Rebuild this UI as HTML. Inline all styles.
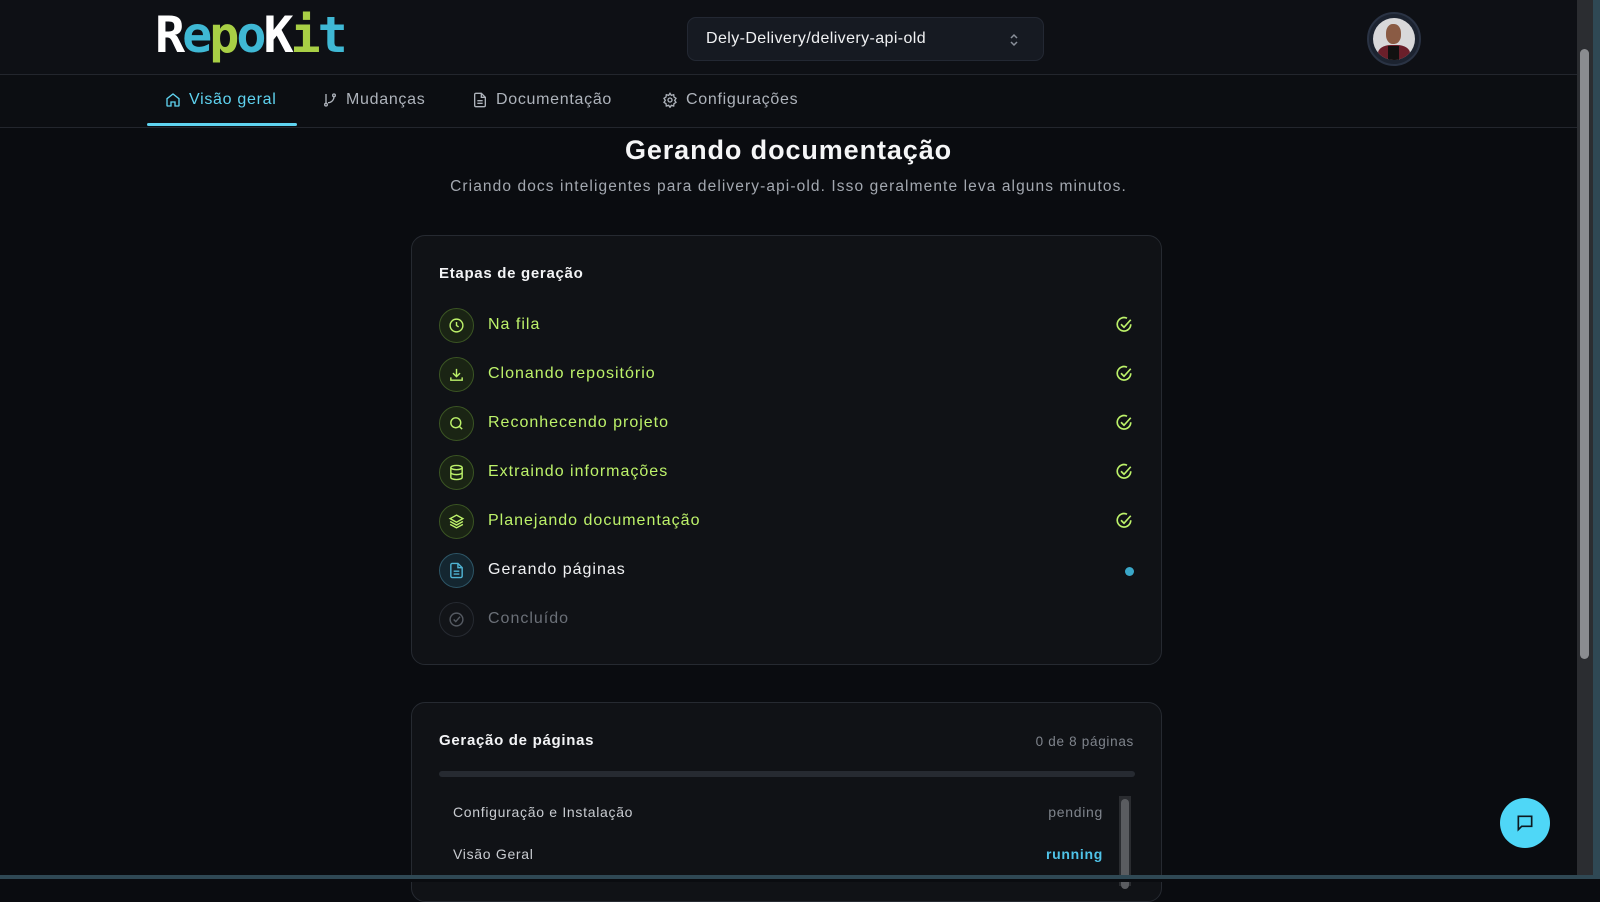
<!DOCTYPE html>
<html><head><meta charset="utf-8"><style>
*{box-sizing:border-box;margin:0;padding:0}
body{width:1600px;height:882px;overflow:hidden;background:#0a0c10;font-family:"Liberation Sans",sans-serif;color:#e5e7eb;position:relative;letter-spacing:.7px}
.hdr{position:absolute;left:0;top:0;width:1577px;height:75px;background:#0e1015;border-bottom:1px solid #23262d}
.tabs{position:absolute;left:0;top:75px;width:1577px;height:53px;background:#0c0e12;border-bottom:1px solid #23262d}
.tab{position:absolute;top:16px;font-size:16px;color:#aeb3bb;display:flex;align-items:center;gap:8px}
.tab svg{width:16px;height:16px}
.card{position:absolute;left:411px;width:751px;background:#101216;border:1px solid #262a31;border-radius:14px}
.row{position:absolute;left:27px;display:flex;align-items:center;height:36px}
.ic{width:35px;height:35px;border-radius:50%;background:#1a2414;border:1px solid #3b5523;display:flex;align-items:center;justify-content:center;margin-right:14px}
.ic svg{width:17px;height:17px}
.lbl{font-size:16px;color:#bdf26a;letter-spacing:1px}
.chk{position:absolute;left:703px;width:18px;height:18px}
</style></head><body>
<div class="hdr">
  <div style="position:absolute;left:155px;top:8px;font:bold 50px 'DejaVu Sans Mono',monospace;letter-spacing:-3px;line-height:55px">
    <span style="color:#fff">R</span><span style="color:#3fb8d4">e</span><span style="color:#a8cf45">p</span><span style="color:#3fb8d4">o</span><span style="color:#fff">K</span><span style="color:#a8cf45">i</span><span style="color:#3fb8d4">t</span>
  </div>
  <div style="position:absolute;left:687px;top:17px;width:357px;height:44px;background:#161a22;border:1px solid #232833;border-radius:9px">
    <div style="position:absolute;left:18px;top:12px;font-size:16px;color:#f0f1f3;letter-spacing:.4px">Dely-Delivery/delivery-api-old</div>
    <svg style="position:absolute;left:320px;top:13px" width="12" height="18" viewBox="0 0 12 18" fill="none" stroke="#8a909a" stroke-width="1.5"><path d="M3 7l3-3 3 3M3 11l3 3 3-3"/></svg>
  </div>
  <div style="position:absolute;left:1367px;top:12px;width:54px;height:54px;border-radius:50%;background:#1c2330;border:2px solid #2a3344">
    <div style="position:absolute;left:4px;top:4px;width:42px;height:42px;border-radius:50%;background:#d8d8da;overflow:hidden">
      <div style="position:absolute;left:13px;top:6px;width:15px;height:20px;border-radius:45%;background:#8a5b44"></div>
      <div style="position:absolute;left:5px;top:27px;width:32px;height:20px;border-radius:40% 40% 0 0;background:#6b1f2a"></div>
      <div style="position:absolute;left:15px;top:28px;width:11px;height:16px;background:#111"></div>
    </div>
  </div>
</div>
<div class="tabs">
  <div class="tab" style="left:165px;color:#5fd3f0"><svg viewBox="0 0 24 24" fill="none" stroke="#5fd3f0" stroke-width="2"><path d="M3 10l9-7 9 7v10a1 1 0 0 1-1 1h-5v-6h-6v6H4a1 1 0 0 1-1-1z"/></svg>Visão geral</div>
  <div style="position:absolute;left:147px;top:48px;width:150px;height:3px;background:#5fd3f0;border-radius:2px"></div>
  <div class="tab" style="left:322px"><svg viewBox="0 0 24 24" fill="none" stroke="#aeb3bb" stroke-width="2"><circle cx="6" cy="19" r="2"/><circle cx="18" cy="5" r="2"/><path d="M6 3v14M18 7a9 9 0 0 1-9 9"/></svg>Mudanças</div>
  <div class="tab" style="left:472px"><svg viewBox="0 0 24 24" fill="none" stroke="#aeb3bb" stroke-width="2"><path d="M14 2H6a2 2 0 0 0-2 2v16a2 2 0 0 0 2 2h12a2 2 0 0 0 2-2V8z"/><path d="M14 2v6h6M8 13h8M8 17h8"/></svg>Documentação</div>
  <div class="tab" style="left:662px"><svg viewBox="0 0 24 24" fill="none" stroke="#aeb3bb" stroke-width="2"><circle cx="12" cy="12" r="3"/><path d="M12 2l2 3 3.5-1 .5 3.5 3 2-2 3 2 3-3 2-.5 3.5-3.5-1-2 3-2-3-3.5 1-.5-3.5-3-2 2-3-2-3 3-2 .5-3.5 3.5 1z"/></svg>Configurações</div>
</div>
<div style="position:absolute;left:0;width:1577px;top:135px;text-align:center;font-size:27px;font-weight:bold;color:#f5f6f7;letter-spacing:.9px">Gerando documentação</div>
<div style="position:absolute;left:0;width:1577px;top:178px;text-align:center;font-size:15.5px;color:#a3a8b0;letter-spacing:1.1px">Criando docs inteligentes para delivery-api-old. Isso geralmente leva alguns minutos.</div>

<div class="card" style="top:235px;height:430px">
  <div style="position:absolute;left:27px;top:29px;font-size:15px;font-weight:bold;color:#f3f4f6">Etapas de geração</div>
  <div class="row" style="top:71px"><div class="ic"><svg viewBox="0 0 24 24" fill="none" stroke="#bdf26a" stroke-width="2"><circle cx="12" cy="12" r="9"/><path d="M12 7v5l3 2"/></svg></div><span class="lbl">Na fila</span></div>
  <div class="row" style="top:120px"><div class="ic"><svg viewBox="0 0 24 24" fill="none" stroke="#bdf26a" stroke-width="2"><path d="M12 4v11M7 10l5 5 5-5M4 16v4h16v-4"/></svg></div><span class="lbl">Clonando repositório</span></div>
  <div class="row" style="top:169px"><div class="ic"><svg viewBox="0 0 24 24" fill="none" stroke="#bdf26a" stroke-width="2"><circle cx="11" cy="11" r="7"/><path d="M16 16l4 4"/></svg></div><span class="lbl">Reconhecendo projeto</span></div>
  <div class="row" style="top:218px"><div class="ic"><svg viewBox="0 0 24 24" fill="none" stroke="#bdf26a" stroke-width="2"><ellipse cx="12" cy="5" rx="8" ry="3"/><path d="M4 5v14c0 1.7 3.6 3 8 3s8-1.3 8-3V5M4 12c0 1.7 3.6 3 8 3s8-1.3 8-3"/></svg></div><span class="lbl">Extraindo informações</span></div>
  <div class="row" style="top:267px"><div class="ic"><svg viewBox="0 0 24 24" fill="none" stroke="#bdf26a" stroke-width="2"><path d="M12 3l9 5-9 5-9-5z"/><path d="M3 12l9 5 9-5M3 16l9 5 9-5"/></svg></div><span class="lbl">Planejando documentação</span></div>
  <div class="row" style="top:316px"><div class="ic" style="background:#142630;border-color:#2d5566"><svg viewBox="0 0 24 24" fill="none" stroke="#4fb4d4" stroke-width="2"><path d="M14 2H6a2 2 0 0 0-2 2v16a2 2 0 0 0 2 2h12a2 2 0 0 0 2-2V8z"/><path d="M14 2v6h6M8 13h8M8 17h8"/></svg></div><span class="lbl" style="color:#f1f2f4">Gerando páginas</span></div>
  <div class="row" style="top:365px"><div class="ic" style="background:#121418;border-color:#262a31"><svg viewBox="0 0 24 24" fill="none" stroke="#555a62" stroke-width="2"><circle cx="12" cy="12" r="9"/><path d="M8 12l3 3 6-7"/></svg></div><span class="lbl" style="color:#6b7078">Concluído</span></div>
  <svg class="chk" style="top:80px" viewBox="0 0 24 24" fill="none" stroke="#bdf26a" stroke-width="2.2"><path d="M21 11a9 9 0 1 1-5-8"/><path d="M8 11l4 4 9-10"/></svg>
  <svg class="chk" style="top:129px" viewBox="0 0 24 24" fill="none" stroke="#bdf26a" stroke-width="2.2"><path d="M21 11a9 9 0 1 1-5-8"/><path d="M8 11l4 4 9-10"/></svg>
  <svg class="chk" style="top:178px" viewBox="0 0 24 24" fill="none" stroke="#bdf26a" stroke-width="2.2"><path d="M21 11a9 9 0 1 1-5-8"/><path d="M8 11l4 4 9-10"/></svg>
  <svg class="chk" style="top:227px" viewBox="0 0 24 24" fill="none" stroke="#bdf26a" stroke-width="2.2"><path d="M21 11a9 9 0 1 1-5-8"/><path d="M8 11l4 4 9-10"/></svg>
  <svg class="chk" style="top:276px" viewBox="0 0 24 24" fill="none" stroke="#bdf26a" stroke-width="2.2"><path d="M21 11a9 9 0 1 1-5-8"/><path d="M8 11l4 4 9-10"/></svg>
  <div style="position:absolute;left:713px;top:331px;width:9px;height:9px;border-radius:50%;background:#3aa7c8"></div>
</div>

<div class="card" style="top:702px;height:200px">
  <div style="position:absolute;left:27px;top:29px;font-size:15px;font-weight:bold;color:#f3f4f6">Geração de páginas</div>
  <div style="position:absolute;right:27px;top:31px;font-size:13.5px;color:#7f848c">0 de 8 páginas</div>
  <div style="position:absolute;left:27px;top:68px;width:696px;height:6px;border-radius:3px;background:#262a31"></div>
  <div style="position:absolute;left:41px;top:101px;font-size:14px;color:#c9ccd1">Configuração e Instalação</div>
  <div style="position:absolute;left:600px;width:91px;text-align:right;top:101px;font-size:14px;color:#7f848c">pending</div>
  <div style="position:absolute;left:41px;top:143px;font-size:14px;color:#c9ccd1">Visão Geral</div>
  <div style="position:absolute;left:600px;width:91px;text-align:right;top:143px;font-size:14px;font-weight:bold;color:#4fc3e8">running</div>
  <div style="position:absolute;left:707px;top:93px;width:12px;height:90px;background:#2a2c30"><div style="margin:3px 2px;width:8px;height:90px;border-radius:4px;background:#5a5c60"></div></div>
</div>

<div style="position:absolute;left:1500px;top:798px;width:50px;height:50px;border-radius:50%;background:#4fd7f7;display:flex;align-items:center;justify-content:center">
  <svg width="20" height="20" viewBox="0 0 24 24" fill="none" stroke="#0d1a20" stroke-width="2"><path d="M4 4h16v12H8l-4 4z"/></svg>
</div>
<div style="position:absolute;left:1577px;top:0;width:16px;height:876px;background:#2b2d31"><div style="position:absolute;left:3px;top:49px;width:9px;height:610px;border-radius:5px;background:#8a8c90"></div></div>
<div style="position:absolute;left:1593px;top:0;width:7px;height:882px;background:#2f4854"></div>
<div style="position:absolute;left:0;top:875px;width:1600px;height:4px;background:#2f4854"></div>
<div style="position:absolute;left:0;top:879px;width:1600px;height:3px;background:#0a0c10"></div>
</body></html>
